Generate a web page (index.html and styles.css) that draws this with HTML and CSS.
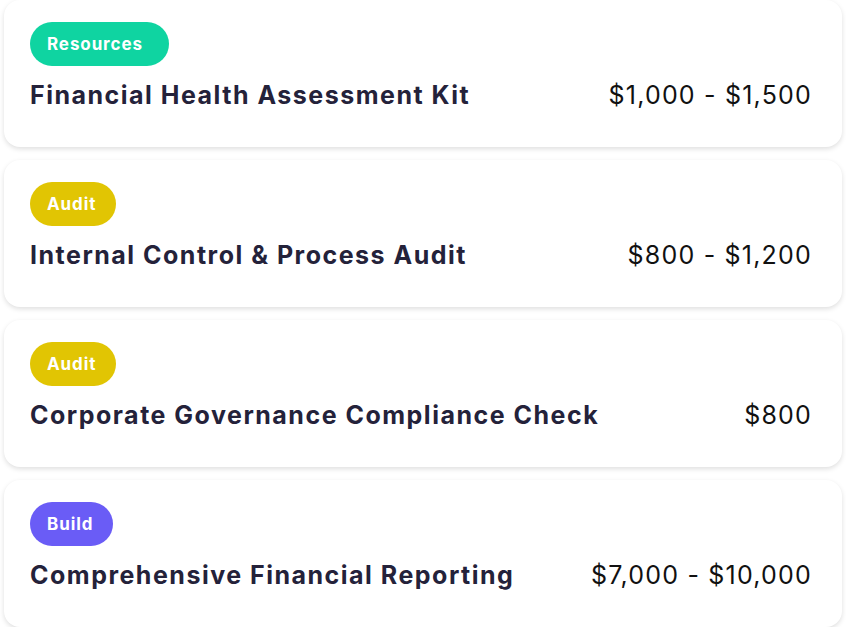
FILE: index.html
```html
<!DOCTYPE html>
<html lang="en">
<head>
<meta charset="utf-8">
<title>Services</title>
<link rel="stylesheet" href="styles.css">
</head>
<body>
<div class="list">
  <div class="card">
    <span class="badge badge-resources">Resources</span>
    <div class="row">
      <h3 class="title">Financial Health Assessment Kit</h3>
      <span class="price">$1,000 - $1,500</span>
    </div>
  </div>
  <div class="card">
    <span class="badge badge-audit">Audit</span>
    <div class="row">
      <h3 class="title">Internal Control &amp; Process Audit</h3>
      <span class="price">$800 - $1,200</span>
    </div>
  </div>
  <div class="card">
    <span class="badge badge-audit">Audit</span>
    <div class="row">
      <h3 class="title">Corporate Governance Compliance Check</h3>
      <span class="price">$800</span>
    </div>
  </div>
  <div class="card">
    <span class="badge badge-build">Build</span>
    <div class="row">
      <h3 class="title">Comprehensive Financial Reporting</h3>
      <span class="price">$7,000 - $10,000</span>
    </div>
  </div>
</div>
</body>
</html>
```
FILE: styles.css
```css
* { box-sizing: border-box; }
html, body { margin: 0; padding: 0; background: #ffffff; }
body { font-family: "Inter", "Open Sans", sans-serif; }
.list {
  display: flex;
  flex-direction: column;
  gap: 13px;
  padding: 0 4px;
}
.card {
  height: 147px;
  background: #ffffff;
  border-radius: 16px;
  box-shadow: 0 2px 5px rgba(0, 0, 0, 0.13);
  padding: 22px 30px 0 26px;
  display: flex;
  flex-direction: column;
  align-items: flex-start;
}
.badge {
  display: inline-flex;
  align-items: center;
  height: 44px;
  padding: 0 20px 0 17px;
  border-radius: 22px;
  color: #ffffff;
  font-weight: 700;
  font-size: 17px;
  letter-spacing: 0.9px;
}
.badge-resources { background: #0fd4a1; padding-right: 26px; }
.badge-audit { background: #e1c503; }
.badge-build { background: #6a5cf6; }
.row {
  margin-top: 14px;
  width: 100%;
  display: flex;
  justify-content: space-between;
  align-items: center;
  height: 30px;
}
.title {
  margin: 0;
  font-size: 25px;
  font-weight: 700;
  color: #24223a;
  line-height: 30px;
  letter-spacing: 1.5px;
}
.price {
  font-size: 25px;
  font-weight: 400;
  color: #111111;
  line-height: 30px;
  letter-spacing: 1.2px;
}
```
